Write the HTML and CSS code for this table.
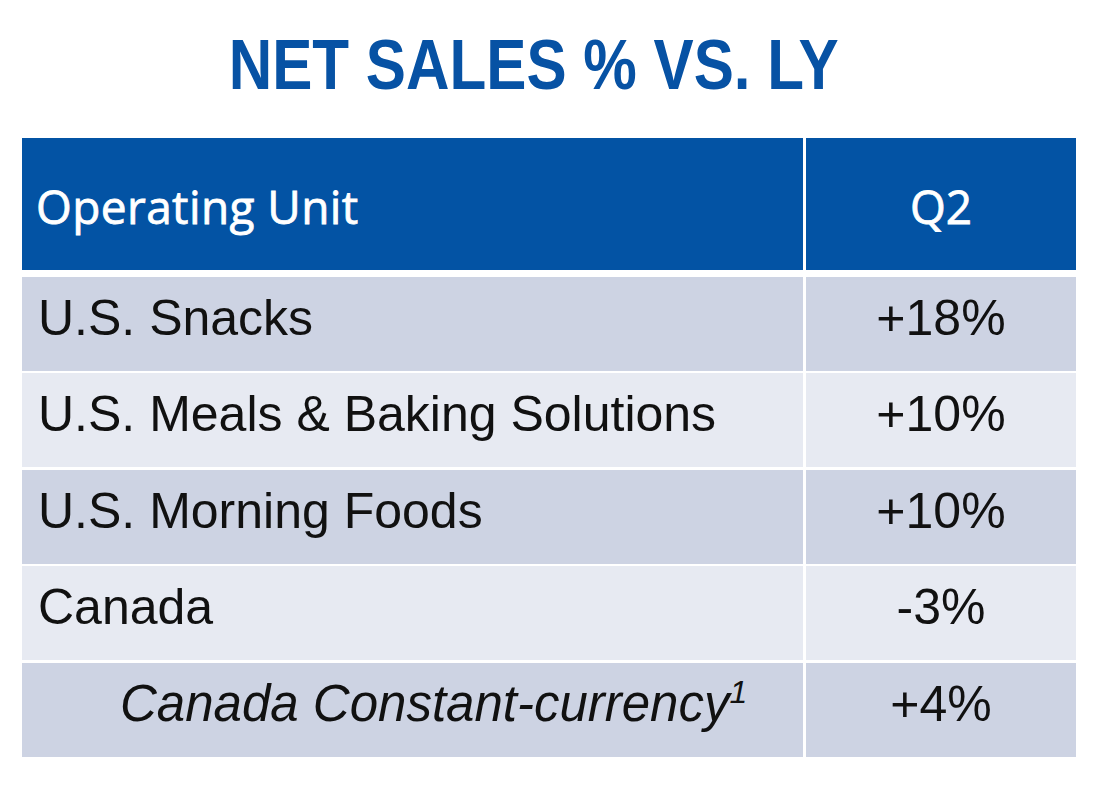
FILE: index.html
```html
<!DOCTYPE html>
<html lang="en">
<head>
<meta charset="utf-8">
<title>Net Sales % vs. LY</title>
<link rel="stylesheet" href="styles.css">
</head>
<body>
<main class="slide">
  <h1 class="title"><span class="title-text">NET SALES % VS. LY</span></h1>
  <div class="table">
    <div class="cell head first">Operating Unit</div>
    <div class="cell head num">Q2</div>

    <div class="cell dark first">U.S. Snacks</div>
    <div class="cell dark num">+18%</div>

    <div class="cell light first">U.S. Meals &amp; Baking Solutions</div>
    <div class="cell light num">+10%</div>

    <div class="cell dark first">U.S. Morning Foods</div>
    <div class="cell dark num">+10%</div>

    <div class="cell light first">Canada</div>
    <div class="cell light num">-3%</div>

    <div class="cell dark first sub"><em>Canada Constant-currency<sup>1</sup></em></div>
    <div class="cell dark num">+4%</div>
  </div>
</main>
</body>
</html>
```

FILE: styles.css
```css
html, body {
  margin: 0;
  padding: 0;
  background: #ffffff;
}

.slide {
  width: 1120px;
  height: 808px;
  overflow: hidden;
  padding: 0 44px 0 22px;
  box-sizing: border-box;
  display: flex;
  flex-direction: column;
}

.title {
  margin: 0;
  height: 138px;
  box-sizing: border-box;
  padding: 25px 0 0 0;
  display: flex;
  justify-content: center;
  font-family: "Liberation Sans", Arial, sans-serif;
  font-weight: 700;
  font-size: 71px;
  line-height: 80px;
  color: #0752a4;
}

.title-text {
  display: inline-block;
  transform: translateX(-15px) scaleX(0.848);
  white-space: nowrap;
}

.table {
  display: grid;
  grid-template-columns: 781px 270px;
  grid-template-rows: 136px repeat(5, 94px);
  column-gap: 3px;
  row-gap: 2.5px;
}

.cell {
  display: flex;
  align-items: center;
  box-sizing: border-box;
  font-family: "Liberation Sans", Arial, sans-serif;
  font-size: 50px;
  color: #111111;
  padding-bottom: 12px;
  white-space: nowrap;
}

.cell.first {
  padding-left: 16px;
}

.cell.num {
  justify-content: center;
}

.cell.head {
  height: 132px;
  align-self: start;
  background: #0353a4;
  color: #ffffff;
  font-family: "Open Sans", "Noto Sans", sans-serif;
  font-weight: 400;
  font-size: 46px;
  -webkit-text-stroke: 0.8px #ffffff;
  padding-top: 4px;
  padding-bottom: 0;
}

.cell.head.first {
  padding-left: 14px;
  letter-spacing: 0.4px;
}

.cell.dark {
  background: #cdd3e3;
}

.cell.light {
  background: #e7eaf2;
}

.cell.sub {
  padding-left: 98px;
}

.cell.sub em {
  font-size: 51px;
}

.cell.sub sup {
  font-size: 32px;
  vertical-align: 18px;
  line-height: 0;
}
```
